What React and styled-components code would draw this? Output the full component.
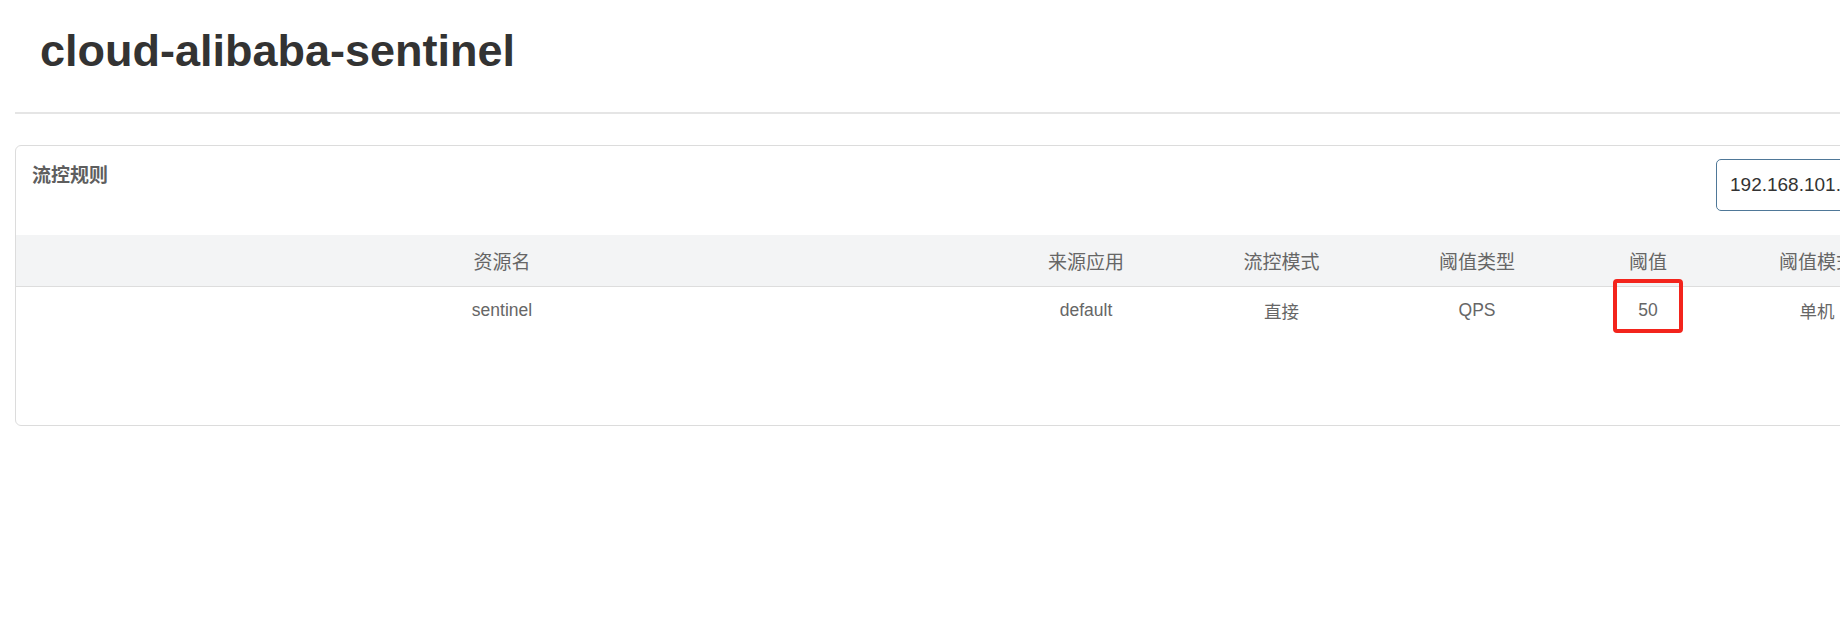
import React from "react";
import styled, { createGlobalStyle } from "styled-components";

const GlobalStyle = createGlobalStyle`
  html, body {
    margin: 0;
    padding: 0;
    background: #fff;
    overflow: hidden;
  }
  body {
    font-family: "Liberation Sans", "Noto Sans CJK SC", sans-serif;
    color: #333;
  }
`;

const Page = styled.div`
  padding: 0 15px;
  width: 2100px;
`;

const PageHeader = styled.header`
  padding: 26px 0 0 25px;
  height: 86px;
  border-bottom: 2px solid #e5e5e5;
`;

const Title = styled.h1`
  margin: 0;
  font-size: 45px;
  line-height: 49px;
  font-weight: bold;
  color: #333;
`;

const Panel = styled.section`
  margin-top: 31px;
  width: 2000px;
  height: 281px;
  box-sizing: border-box;
  border: 1px solid #dcdcdc;
  border-radius: 6px;
  background: #fff;
`;

const PanelHeading = styled.div`
  display: flex;
  justify-content: space-between;
  align-items: flex-start;
  height: 89px;
  box-sizing: border-box;
  padding: 13px 16px 0 16px;
`;

const PanelTitle = styled.h3`
  margin: 4px 0 0;
  font-size: 19px;
  line-height: 26px;
  font-weight: bold;
  color: #5e5e5e;
`;

const SearchInput = styled.input`
  width: 282px;
  height: 52px;
  box-sizing: border-box;
  padding: 0 13px;
  border: 1px solid #4f7898;
  border-radius: 5px;
  font-family: "Liberation Sans", sans-serif;
  font-size: 19px;
  color: #333;
  outline: none;
`;

const Table = styled.table`
  width: 100%;
  border-collapse: collapse;
  table-layout: fixed;
`;

const HeadCell = styled.th`
  height: 51px;
  padding: 0;
  background: #f3f4f5;
  border-bottom: 1px solid #dddddd;
  font-size: 19px;
  font-weight: normal;
  color: #666;
  text-align: center;
`;

const Cell = styled.td`
  position: relative;
  height: 47px;
  padding: 0;
  font-size: 17.5px;
  color: #666;
  text-align: center;
`;

const Highlight = styled.span`
  position: absolute;
  top: -8px;
  left: 50%;
  width: 70px;
  height: 54px;
  margin-left: -35px;
  box-sizing: border-box;
  border: 4px solid #f3241c;
  border-radius: 4px;
  pointer-events: none;
`;

const columns = [
  { title: "资源名", width: 972 },
  { title: "来源应用", width: 196 },
  { title: "流控模式", width: 195 },
  { title: "阈值类型", width: 196 },
  { title: "阈值", width: 146 },
  { title: "阈值模式", width: 192 },
  { title: "是否集群", width: 110 },
];

const rules = [
  {
    resource: "sentinel",
    limitApp: "default",
    strategy: "直接",
    grade: "QPS",
    count: 50,
    clusterMode: "单机",
    cluster: "否",
  },
];

export default function App() {
  return (
    <>
      <GlobalStyle />
      <Page>
        <PageHeader>
          <Title>cloud-alibaba-sentinel</Title>
        </PageHeader>
        <Panel>
          <PanelHeading>
            <PanelTitle>流控规则</PanelTitle>
            <SearchInput readOnly value="192.168.101.128:8720" />
          </PanelHeading>
          <Table>
            <colgroup>
              {columns.map((col) => (
                <col key={col.title} style={{ width: col.width }} />
              ))}
            </colgroup>
            <thead>
              <tr>
                {columns.map((col) => (
                  <HeadCell key={col.title}>{col.title}</HeadCell>
                ))}
              </tr>
            </thead>
            <tbody>
              {rules.map((rule) => (
                <tr key={rule.resource}>
                  <Cell>{rule.resource}</Cell>
                  <Cell>{rule.limitApp}</Cell>
                  <Cell>{rule.strategy}</Cell>
                  <Cell>{rule.grade}</Cell>
                  <Cell>
                    {rule.count}
                    <Highlight />
                  </Cell>
                  <Cell>{rule.clusterMode}</Cell>
                  <Cell>{rule.cluster}</Cell>
                </tr>
              ))}
            </tbody>
          </Table>
        </Panel>
      </Page>
    </>
  );
}
